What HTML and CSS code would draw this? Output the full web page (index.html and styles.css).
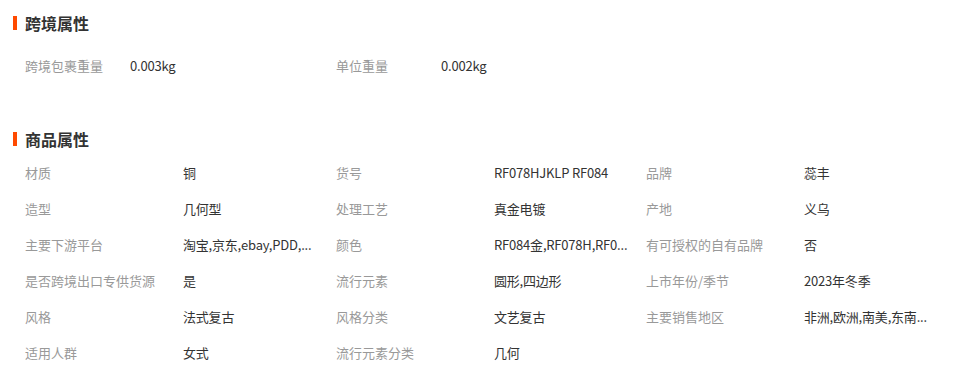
FILE: index.html
```html
<!DOCTYPE html>
<html lang="zh-CN">
<head>
<meta charset="utf-8">
<title>属性</title>
<link rel="stylesheet" href="styles.css">
</head>
<body>
<section class="section section-cross">
  <h2 class="section-title">跨境属性</h2>
  <div class="attrs attrs-cross">
    <div class="attr"><span class="label">跨境包裹重量</span><span class="value">0.003kg</span></div>
    <div class="attr"><span class="label">单位重量</span><span class="value">0.002kg</span></div>
  </div>
</section>
<section class="section section-goods">
  <h2 class="section-title">商品属性</h2>
  <div class="attrs attrs-goods">
    <div class="attr"><span class="label">材质</span><span class="value">铜</span></div>
    <div class="attr"><span class="label">货号</span><span class="value">RF078HJKLP RF084</span></div>
    <div class="attr"><span class="label">品牌</span><span class="value">蕊丰</span></div>
    <div class="attr"><span class="label">造型</span><span class="value">几何型</span></div>
    <div class="attr"><span class="label">处理工艺</span><span class="value">真金电镀</span></div>
    <div class="attr"><span class="label">产地</span><span class="value">义乌</span></div>
    <div class="attr"><span class="label">主要下游平台</span><span class="value" title="淘宝,京东,ebay,PDD,亚马逊,速卖通">淘宝,京东,ebay,PDD,...</span></div>
    <div class="attr"><span class="label">颜色</span><span class="value" title="RF084金,RF078H,RF078J,RF078K">RF084金,RF078H,RF0...</span></div>
    <div class="attr"><span class="label">有可授权的自有品牌</span><span class="value">否</span></div>
    <div class="attr"><span class="label">是否跨境出口专供货源</span><span class="value">是</span></div>
    <div class="attr"><span class="label">流行元素</span><span class="value">圆形,四边形</span></div>
    <div class="attr"><span class="label">上市年份/季节</span><span class="value">2023年冬季</span></div>
    <div class="attr"><span class="label">风格</span><span class="value">法式复古</span></div>
    <div class="attr"><span class="label">风格分类</span><span class="value">文艺复古</span></div>
    <div class="attr"><span class="label">主要销售地区</span><span class="value" title="非洲,欧洲,南美,东南亚,北美">非洲,欧洲,南美,东南...</span></div>
    <div class="attr"><span class="label">适用人群</span><span class="value">女式</span></div>
    <div class="attr"><span class="label">流行元素分类</span><span class="value">几何</span></div>
  </div>
</section>
</body>
</html>
```

FILE: styles.css
```css
html, body {
  margin: 0;
  padding: 0;
  background: #fff;
}

body {
  font-family: "Noto Sans CJK SC", "Noto Sans", sans-serif;
  font-size: 13px;
  color: #333;
}

.section-title {
  margin: 0 0 0 13px;
  padding-left: 8px;
  border-left: 4px solid #ff4a00;
  height: 14px;
  line-height: 14px;
  font-size: 16px;
  font-weight: bold;
  color: #333;
}

.section-cross {
  padding-top: 16px;
}

.section-goods {
  padding-top: 48px;
}

.attrs {
  display: grid;
  grid-template-columns: 311px 310px 310px;
  padding-left: 25px;
}

.attrs-cross {
  margin-top: 18px;
}

.attrs-goods {
  margin-top: 9px;
}

.attr {
  display: flex;
  align-items: center;
  height: 36px;
  line-height: 18px;
}

.label {
  flex: 0 0 158px;
  color: #999;
  white-space: nowrap;
}

.attrs-cross .label {
  flex-basis: 105px;
}

.value {
  white-space: nowrap;
  color: #333;
  letter-spacing: -0.2px;
}
```
